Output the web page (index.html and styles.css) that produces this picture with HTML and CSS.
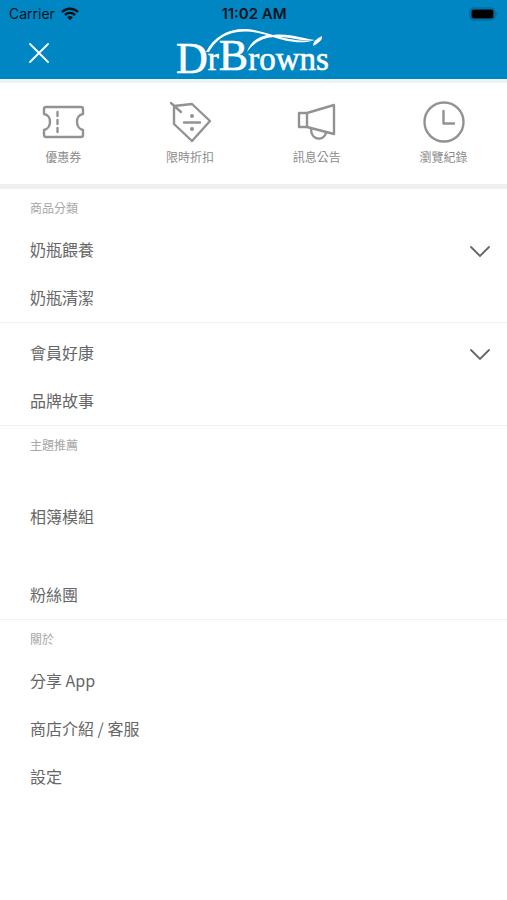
FILE: index.html
```html
<!DOCTYPE html>
<html lang="zh-Hant">
<head>
<meta charset="utf-8">
<meta name="viewport" content="width=device-width, initial-scale=1">
<title>Dr Brown's</title>
<link rel="stylesheet" href="styles.css">
</head>
<body>
<header class="top">
  <div class="status">
    <span class="carrier">Carrier
      <svg width="18" height="14" viewBox="0 0 18 14" fill="none" stroke="#06131c" stroke-width="2.4"><path d="M1 5C5.500 .6 12.500 .6 17 5M3.900 8C7 5.200 11 5.200 14.100 8"/><path d="M6.200 10.200Q9 8 11.800 10.200L9 13.200Z" fill="#06131c" stroke="none"/></svg>
    </span>
    <span class="time">11:02 AM</span>
    <svg class="battery" width="30" height="14" viewBox="0 0 30 14"><rect x="1" y="1" width="25" height="12" rx="3.500" fill="none" stroke="#045f8c"/><rect x="2.500" y="2.500" width="22" height="9" rx="2" fill="#000"/><path d="M27.500 5Q29.500 7 27.500 9Z" fill="#045f8c"/></svg>
  </div>
  <div class="nav">
    <button class="close" type="button" aria-label="關閉">
      <svg width="20" height="20" viewBox="0 0 20 20" stroke="#fff" stroke-width="1.800" stroke-linecap="round"><path d="M1 1L19 19M19 1L1 19"/></svg>
    </button>
    <svg class="logo" width="156" height="52" viewBox="0 0 156 52" fill="#fff" role="img" aria-label="Dr Brown's">
      <text class="logo-text" x="0" y="46"><tspan class="logo-cap">D</tspan><tspan dy="-3">r</tspan><tspan class="logo-cap">B</tspan>rowns</text>
      <path d="M30 25C38 9 53 1 71 2C81 3 90 6 97 8C114 6 128 12 139 13C127 15 113 9 98 10C86 11 77 16 71 25C74 15 82 10 91 8C77 4 64 3 51 8C42 12 37 18 33 25Z"/>
      <path d="M97 8C111 12 125 15 139 13C125 18 109 14 97 10ZM137 19Q137 13 146 9Q147 14 137 19Z"/>
    </svg>
  </div>
</header>
<nav class="shortcuts">
  <a href="#coupon"><svg width="44" height="44" viewBox="0 0 44 44"><path d="M5 7H40Q42 7 42 9V14C34 15 34 28 42 30V35Q42 37 40 37H5Q3 37 3 35V30C11 28 11 15 3 14V9Q3 7 5 7Z"/><path d="M16.500 12V16M16.500 20V24M16.500 28V32"/></svg>優惠券</a>
  <a href="#sale"><svg width="44" height="44" viewBox="0 0 44 44"><path d="M6 6L24 4L42 21L24 41L6 24ZM3 3L13 12M16 22.500H32"/><circle class="dot" cx="24" cy="16" r="2"/><circle class="dot" cx="24" cy="29" r="2"/></svg>限時折扣</a>
  <a href="#news"><svg width="44" height="44" viewBox="0 0 44 44"><path d="M4 13H12L39 5V34L12 27H4ZM12 13V27M16 29C16 41 29 41 31 33"/></svg>訊息公告</a>
  <a href="#history"><svg width="44" height="44" viewBox="0 0 44 44"><circle cx="22" cy="22" r="19.500"/><path d="M21.500 11V23.500H32"/></svg>瀏覽紀錄</a>
</nav>
<main>
  <section class="group">
    <h2>商品分類</h2>
    <button class="item" type="button">奶瓶餵養<svg width="20" height="18" viewBox="0 0 20 18"><path d="M1 7L10 16L19 7"/></svg></button>
    <a class="item" href="#clean">奶瓶清潔</a>
  </section>
  <section class="group untitled">
    <button class="item" type="button">會員好康<svg width="20" height="18" viewBox="0 0 20 18"><path d="M1 7L10 16L19 7"/></svg></button>
    <a class="item" href="#story">品牌故事</a>
  </section>
  <section class="group spaced">
    <h2>主題推薦</h2>
    <a class="item" href="#albums">相簿模組</a>
    <a class="item" href="#fans">粉絲團</a>
  </section>
  <section class="group">
    <h2>關於</h2>
    <a class="item" href="#share">分享 App</a>
    <a class="item" href="#service">商店介紹 / 客服</a>
    <a class="item" href="#settings">設定</a>
  </section>
</main>
</body>
</html>
```
FILE: styles.css
```css
* { box-sizing: border-box; }
body {
  margin: 0;
  background: #fff;
  color: #666;
  font-family: "Noto Sans CJK TC", sans-serif;
  font-size: 16px;
}
a { color: inherit; text-decoration: none; }
button { border: 0; padding: 0; background: none; color: inherit; font: inherit; text-align: left; }
svg { display: block; flex: none; }

.top { background: #0087c3; border-bottom: 4px solid #edf2f4; }
.status {
  display: grid;
  grid-template-columns: 1fr auto 1fr;
  align-items: center;
  height: 27px;
  padding: 0 8px 0 9px;
  color: #06131c;
  font-family: Inter, sans-serif;
  font-size: 14px;
}
.carrier { display: flex; align-items: center; gap: 6px; }
.time { font-size: 15px; font-weight: 600; }
.battery { justify-self: end; }
.nav {
  display: grid;
  grid-template-columns: 1fr auto 1fr;
  align-items: center;
  height: 52px;
}
.close { width: 20px; margin-left: 29px; }
.logo { overflow: visible; }
.logo-text {
  font-family: "Liberation Serif", serif;
  font-size: 33px;
  stroke: #fff;
  stroke-width: 0.6;
}
.logo-cap { font-size: 44px; }

.shortcuts {
  display: grid;
  grid-template-columns: repeat(4, 1fr);
  height: 106px;
  padding-top: 17px;
  border-bottom: 5px solid #efefef;
  color: #8c8c8c;
  font-size: 12px;
  line-height: 18px;
}
.shortcuts a { display: flex; flex-direction: column; align-items: center; gap: 4px; }
.shortcuts svg {
  fill: none;
  stroke: #929292;
  stroke-width: 2.4;
  stroke-linejoin: round;
  stroke-linecap: round;
}
.shortcuts .dot { fill: #929292; stroke: none; }

.group { border-bottom: 1px solid #f2f2f2; }
.group:last-child { border-bottom: 0; }
.untitled { padding-top: 6px; }
.group h2 {
  margin: 0;
  padding-left: 30px;
  color: #a6a6a6;
  font-size: 12px;
  font-weight: 400;
  line-height: 37px;
}
.item {
  display: flex;
  align-items: center;
  justify-content: space-between;
  width: 100%;
  height: 48px;
  padding: 0 17px 2px 30px;
}
.item svg { fill: none; stroke: #666; stroke-width: 1.8; stroke-linecap: round; }
.spaced .item { margin-top: 30px; }
```
